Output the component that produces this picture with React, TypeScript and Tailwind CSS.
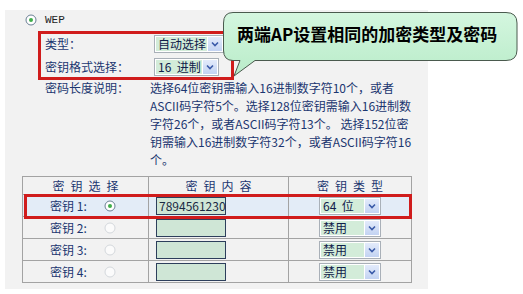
import React from "react";

const F = "font-['Noto_Sans_CJK_SC','Noto_Sans',sans-serif]";

function Radio({ on }: { on?: boolean }) {
  return (
    <svg width="12" height="12" viewBox="0 0 12 12" className="block">
      <circle cx="6" cy="6" r="5" fill={on ? "#ffffff" : "#fbfbfb"} stroke={on ? "#6a7f94" : "#d4d8dc"} strokeWidth="1" />
      {on && <circle cx="6" cy="6" r="2" fill="#3fae4a" />}
    </svg>
  );
}

function Select({ text, w }: { text: string; w: number }) {
  return (
    <div className="flex h-[18px] items-stretch border border-[#a9b0b8] bg-white p-[1px]" style={{ width: w }}>
      <div className="flex flex-1 items-center whitespace-pre bg-[#d3ecd9] pl-[2px] text-[12px] leading-none text-[#10204a]">{text}</div>
      <div className="ml-[1px] flex w-[14px] items-center justify-center bg-gradient-to-b from-[#e3ebfb] to-[#c3d3f2]">
        <svg width="8" height="6" viewBox="0 0 8 6">
          <path d="M1 1.5 L4 4.5 L7 1.5" fill="none" stroke="#3a5aa8" strokeWidth="1.6" />
        </svg>
      </div>
    </div>
  );
}

export default function App() {
  const desc = [
    "选择64位密钥需输入16进制数字符10个，或者",
    "ASCII码字符5个。选择128位密钥需输入16进制数",
    "字符26个，或者ASCII码字符13个。 选择152位密",
    "钥需输入16进制数字符32个，或者ASCII码字符16",
    "个。",
  ];
  const rows = [
    { n: "1", on: true, val: "7894561230", type: "64  位" },
    { n: "2", on: false, val: "", type: "禁用" },
    { n: "3", on: false, val: "", type: "禁用" },
    { n: "4", on: false, val: "", type: "禁用" },
  ];
  const th = "border border-[#a3a3a3] p-0 text-center text-[12px] font-normal leading-none tracking-[6px] pl-[6px]";
  return (
    <div className={`relative h-[294px] w-[523px] overflow-hidden bg-white ${F} text-[12px] text-[#1b3670]`}>
      <div className="ml-[5px] mt-[10px] flex h-[279px] w-[423px] flex-col bg-[#f2f2f2]">
        {/* WEP */}
        <div className="flex h-[18px] items-center pl-[20px] pt-[2px]">
          <Radio on />
          <span className="ml-[8px] font-['Liberation_Mono',monospace] text-[11px] text-[#222]">WEP</span>
        </div>
        {/* boxed settings */}
        <div className="ml-[33px] mt-[3px] flex h-[49px] w-[196px] flex-col justify-center gap-[5px] border-[3px] border-[#d01c1c] pl-[4px]">
          <div className="flex items-center">
            <span className="w-[109px]">类型：</span>
            <Select text="自动选择" w={70} />
          </div>
          <div className="flex items-center">
            <span className="w-[109px]">密钥格式选择：</span>
            <Select text="16  进制" w={65} />
          </div>
        </div>
        {/* description */}
        <div className="ml-[40px] mt-[-1px] flex leading-[18px]">
          <span className="w-[105px]">密码长度说明：</span>
          <div className="flex flex-col">
            {desc.map((l, i) => (
              <span key={i} className="whitespace-pre">{l}</span>
            ))}
          </div>
        </div>
        {/* table */}
        <table className="ml-[17px] mt-[7px] w-[389px] table-fixed border-collapse">
          <colgroup>
            <col className="w-[126px]" />
            <col className="w-[140px]" />
            <col className="w-[123px]" />
          </colgroup>
          <thead>
            <tr className="h-[18px]">
              <th className={th}>密钥选择</th>
              <th className={th}>密钥内容</th>
              <th className={th}>密钥类型</th>
            </tr>
          </thead>
          <tbody>
            {rows.map((r) => (
              <tr key={r.n} className={`h-[22px] ${r.on ? "bg-[#e3ecf7]" : ""}`}>
                <td className="border border-[#a3a3a3] p-0">
                  <div className="flex items-center pl-[27px]">
                    <span className="w-[54px] whitespace-pre">密钥 {r.n}:</span>
                    <Radio on={r.on} />
                  </div>
                </td>
                <td className="border border-[#a3a3a3] p-0">
                  <div className="ml-[7px] flex h-[18px] w-[70px] items-center border border-[#2d3f5c] bg-[#cfe6d6] pl-[2px] text-[12px] leading-none text-[#1a2a44]">
                    {r.val}
                  </div>
                </td>
                <td className="border border-[#a3a3a3] p-0">
                  <div className="flex justify-center">
                    <Select text={r.type} w={62} />
                  </div>
                </td>
              </tr>
            ))}
          </tbody>
        </table>
      </div>

      {/* red highlight for key 1 row */}
      <div className="absolute left-[24px] top-[194px] h-[25px] w-[388px] border-[3px] border-[#d01c1c]" />

      {/* callout */}
      <div className="absolute left-[221px] top-[10px] h-[70px] w-[300px]">
        <svg width="300" height="70" viewBox="0 0 300 70" className="absolute left-0 top-0">
          <defs>
            <linearGradient id="cg" x1="0" y1="0" x2="0" y2="1">
              <stop offset="0" stopColor="#d4f6df" />
              <stop offset="1" stopColor="#b9ecc9" />
            </linearGradient>
          </defs>
          <path
            d="M12 2.5 H285 Q296 2.5 296 13 V40 Q296 50.5 285 50.5 H34 L13 66 L19 50.5 H12 Q2.5 50.5 2.5 40 V13 Q2.5 2.5 12 2.5 Z"
            fill="url(#cg)"
            stroke="#4a5a4e"
            strokeWidth="1"
          />
        </svg>
        <div className="absolute left-[16px] top-[15px] whitespace-nowrap text-[17px] font-bold leading-none text-black">
          两端AP设置相同的加密类型及密码
        </div>
      </div>
    </div>
  );
}
